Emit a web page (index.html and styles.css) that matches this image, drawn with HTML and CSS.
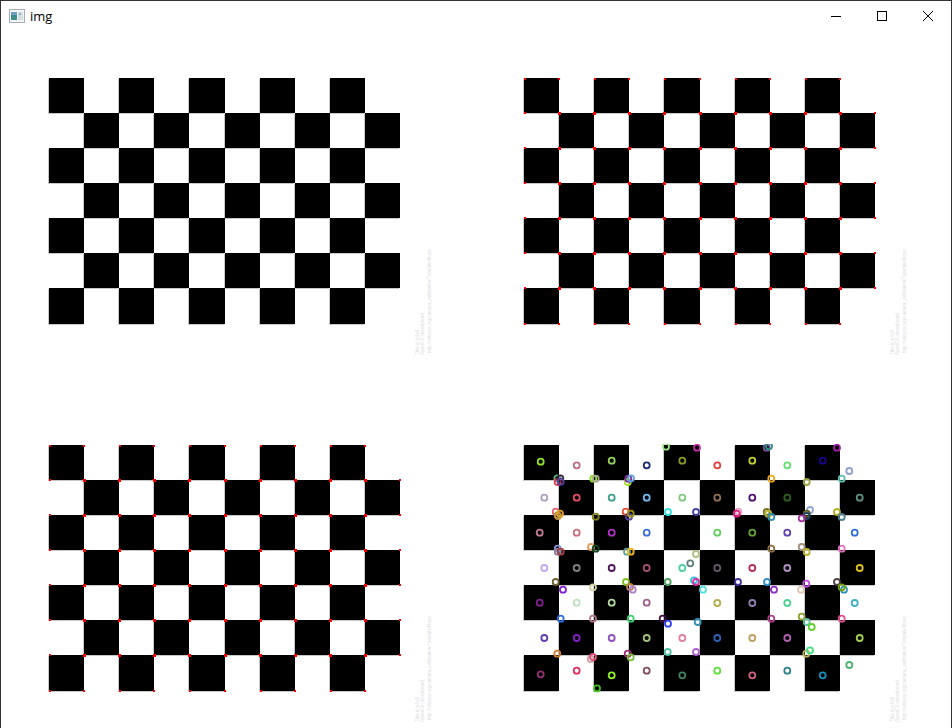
FILE: index.html
```html
<!DOCTYPE html>
<html>
  <head>
    <title>img</title>

    <link rel="stylesheet" href="styles.css">
  </head>
  <body>
    <div class="window">
      <div class="titlebar">
        <svg class="app-icon" width="16" height="14" viewBox="0 0 16 14">
          <rect x="0.5" y="0.5" width="15" height="13" fill="#f2f4f6" stroke="#a9adb3"/>
          <rect x="2" y="3" width="6" height="8" fill="#3f8f8a"/>
          <rect x="2" y="3" width="6" height="3" fill="#6f9fc4"/>
          <rect x="9" y="3" width="5" height="8" fill="#d5dde2"/>
          <rect x="10" y="4" width="2" height="2" fill="#8fb0b8"/>
        </svg>
        <span class="title">img</span>
        <div class="controls">
          <div class="control">
            <svg width="12" height="12" viewBox="0 0 12 12"><path d="M1 6.5H11" class="glyph"/></svg>
          </div>
          <div class="control">
            <svg width="12" height="12" viewBox="0 0 12 12"><rect x="1.5" y="1.5" width="9" height="9" class="glyph"/></svg>
          </div>
          <div class="control">
            <svg width="12" height="12" viewBox="0 0 12 12"><path d="M1 1L11 11M11 1L1 11" class="glyph"/></svg>
          </div>
        </div>
      </div>

      <div class="panels">
        <!-- top left: plain board, shared defs live here -->
        <svg class="panel" width="428" height="282" viewBox="0 0 428 282">
          <defs>
            <path id="squares" d="
              M1 1H36V36H1Z M71 1H106V36H71Z M141 1H177V36H141Z M212 1H247V36H212Z M282 1H317V36H282Z
              M36 36H71V71H36Z M106 36H141V71H106Z M177 36H212V71H177Z M247 36H282V71H247Z M317 36H352V71H317Z
              M1 71H36V106H1Z M71 71H106V106H71Z M141 71H177V106H141Z M212 71H247V106H212Z M282 71H317V106H282Z
              M36 106H71V141H36Z M106 106H141V141H106Z M177 106H212V141H177Z M247 106H282V141H247Z M317 106H352V141H317Z
              M1 141H36V176H1Z M71 141H106V176H71Z M141 141H177V176H141Z M212 141H247V176H212Z M282 141H317V176H282Z
              M36 176H71V211H36Z M106 176H141V211H106Z M177 176H212V211H177Z M247 176H282V211H247Z M317 176H352V211H317Z
              M1 211H36V247H1Z M71 211H106V247H71Z M141 211H177V247H141Z M212 211H247V247H212Z M282 211H317V247H282Z"/>

            <g id="board">
              <use href="#squares" x="-1" y="1" class="edge"/>
              <use href="#squares" class="black"/>
              <g class="watermark">
                <text transform="translate(371 278) rotate(-90)">This is a 9x6</text>
                <text transform="translate(376 278) rotate(-90)">OpenCV chessboard</text>
                <text transform="translate(383 276) rotate(-90)">http://wiki.ros.org/camera_calibration/Tutorials/Mono</text>
              </g>
            </g>

            <path id="dot-row" d="M35 35h3v3h-3z M70 35h3v3h-3z M105 35h3v3h-3z M140 35h3v3h-3z M176 35h3v3h-3z M211 35h3v3h-3z M246 35h3v3h-3z M281 35h3v3h-3z M316 35h3v3h-3z"/>
            <path id="edge-row" d="M1 1h2v2h-2z M35 1h2v2h-2z M71 1h2v2h-2z M105 1h2v2h-2z M141 1h2v2h-2z M176 1h2v2h-2z M212 1h2v2h-2z M246 1h2v2h-2z M282 1h2v2h-2z M316 1h2v2h-2z"/>
            <path id="edge-col" d="M0 35h2v2h-2z M0 70h2v2h-2z M0 105h2v2h-2z M0 140h2v2h-2z M0 175h2v2h-2z M0 210h2v2h-2z"/>

            <g id="corners" class="red">
              <use href="#dot-row"/>
              <use href="#dot-row" y="35"/>
              <use href="#dot-row" y="70"/>
              <use href="#dot-row" y="105"/>
              <use href="#dot-row" y="140"/>
              <use href="#dot-row" y="175"/>
              <use href="#edge-row"/>
              <use href="#edge-row" y="245"/>
              <use href="#edge-col" x="1"/>
              <use href="#edge-col" x="351"/>
            </g>
          </defs>
          <use href="#board"/>
        </svg>

        <!-- top right: detected corners -->
        <svg class="panel" width="428" height="282" viewBox="0 0 428 282">
          <use href="#board"/>
          <use href="#corners"/>
        </svg>

        <!-- bottom left: refined corners -->
        <svg class="panel" width="428" height="282" viewBox="0 0 428 282">
          <use href="#board"/>
          <use href="#corners"/>
        </svg>

        <!-- bottom right: random coloured rings, page coordinates -->
        <svg class="panel rings" width="428" height="282" viewBox="523 444 428 282">
          <use href="#board" x="523" y="444"/>
          <circle cx="540.7" cy="461.7" r="3" stroke="#8fe030"/>
          <circle cx="576.7" cy="465.3" r="3" stroke="#c06a8a"/>
          <circle cx="611.7" cy="460.7" r="3" stroke="#98d060"/>
          <circle cx="646.7" cy="465.3" r="3" stroke="#1a2a70"/>
          <circle cx="666" cy="446.7" r="3" stroke="#98e080"/>
          <circle cx="682.3" cy="460.7" r="3" stroke="#8a9a20"/>
          <circle cx="697" cy="447.7" r="3" stroke="#c030a0"/>
          <circle cx="557.3" cy="478.3" r="3" stroke="#50b080"/>
          <circle cx="557.7" cy="482" r="3" stroke="#e04050"/>
          <circle cx="560.3" cy="478.3" r="3" stroke="#402030"/>
          <circle cx="560.7" cy="481.7" r="3" stroke="#5040a0"/>
          <circle cx="593.3" cy="478.7" r="3" stroke="#80e020"/>
          <circle cx="595.7" cy="478.7" r="3" stroke="#b0a890"/>
          <circle cx="627.7" cy="482" r="3" stroke="#b0e030"/>
          <circle cx="628.3" cy="478.7" r="3" stroke="#8030a0"/>
          <circle cx="631" cy="478.3" r="3" stroke="#60a0e0"/>
          <circle cx="544.3" cy="497.7" r="3" stroke="#b0a0c0"/>
          <circle cx="576.7" cy="497.7" r="3" stroke="#e05060"/>
          <circle cx="611.7" cy="497.7" r="3" stroke="#40a090"/>
          <circle cx="646.7" cy="497.7" r="3" stroke="#70b8f0"/>
          <circle cx="682.3" cy="497.7" r="3" stroke="#80c880"/>
          <circle cx="555.7" cy="511.7" r="3" stroke="#e06070"/>
          <circle cx="557.7" cy="515.3" r="3" stroke="#90a040"/>
          <circle cx="558" cy="516" r="3" stroke="#c09040"/>
          <circle cx="560" cy="513.7" r="3" stroke="#e0a020"/>
          <circle cx="595.7" cy="516.7" r="3" stroke="#808020"/>
          <circle cx="625.7" cy="511.7" r="3" stroke="#e05030"/>
          <circle cx="629" cy="516.7" r="3" stroke="#5040a0"/>
          <circle cx="630.7" cy="513.7" r="3" stroke="#a09010"/>
          <circle cx="668" cy="512" r="3" stroke="#30e0e0"/>
          <circle cx="696" cy="512" r="3" stroke="#4040a0"/>
          <circle cx="539.7" cy="532.7" r="3" stroke="#c07a90"/>
          <circle cx="576.7" cy="532.7" r="3" stroke="#c87080"/>
          <circle cx="611.7" cy="532.7" r="3" stroke="#b030c0"/>
          <circle cx="646.7" cy="532.7" r="3" stroke="#4070e0"/>
          <circle cx="557.7" cy="548.7" r="3" stroke="#8090d0"/>
          <circle cx="557.7" cy="551.7" r="3" stroke="#9080a0"/>
          <circle cx="560.7" cy="551.7" r="3" stroke="#a04040"/>
          <circle cx="591" cy="547" r="3" stroke="#e0a060"/>
          <circle cx="595.7" cy="548.7" r="3" stroke="#104020"/>
          <circle cx="627" cy="551.7" r="3" stroke="#60a0a0"/>
          <circle cx="630.7" cy="551.7" r="3" stroke="#f0b820"/>
          <circle cx="544.3" cy="568" r="3" stroke="#c0a8f0"/>
          <circle cx="576.7" cy="568" r="3" stroke="#808080"/>
          <circle cx="611.7" cy="568" r="3" stroke="#501860"/>
          <circle cx="646.7" cy="568" r="3" stroke="#a05070"/>
          <circle cx="696" cy="554" r="3" stroke="#b0c080"/>
          <circle cx="690.3" cy="563.3" r="3" stroke="#608080"/>
          <circle cx="682.3" cy="568" r="3" stroke="#50d0a0"/>

          <circle cx="717.3" cy="465.3" r="3" stroke="#e04040"/>
          <circle cx="752.3" cy="460.7" r="3" stroke="#c0d030"/>
          <circle cx="787.3" cy="465.3" r="3" stroke="#60e070"/>
          <circle cx="822.7" cy="460.7" r="3" stroke="#200090"/>
          <circle cx="766.7" cy="447.7" r="3" stroke="#7050a0"/>
          <circle cx="769" cy="446.3" r="3" stroke="#309080"/>
          <circle cx="837" cy="447.7" r="3" stroke="#a020a0"/>
          <circle cx="849.3" cy="471" r="3" stroke="#90a0d0"/>
          <circle cx="771.3" cy="478.7" r="3" stroke="#f0a820"/>
          <circle cx="806.7" cy="482" r="3" stroke="#a0a040"/>
          <circle cx="841.7" cy="478.7" r="3" stroke="#60c0b0"/>
          <circle cx="717.3" cy="497.7" r="3" stroke="#907050"/>
          <circle cx="752.3" cy="497.7" r="3" stroke="#501070"/>
          <circle cx="787.3" cy="497.7" r="3" stroke="#306020"/>
          <circle cx="859.7" cy="497.7" r="3" stroke="#609080"/>
          <circle cx="738.3" cy="511.7" r="3" stroke="#f0a0c0"/>
          <circle cx="736.7" cy="513.7" r="3" stroke="#e02080"/>
          <circle cx="766.7" cy="512" r="3" stroke="#707020"/>
          <circle cx="768.3" cy="513.7" r="3" stroke="#c0b030"/>
          <circle cx="771.3" cy="517" r="3" stroke="#3090b0"/>
          <circle cx="810" cy="510" r="3" stroke="#90a8d0"/>
          <circle cx="806.7" cy="513.7" r="3" stroke="#606020"/>
          <circle cx="806.7" cy="516" r="3" stroke="#204060"/>
          <circle cx="801.7" cy="518.3" r="3" stroke="#a030a0"/>
          <circle cx="837" cy="512" r="3" stroke="#b0b020"/>
          <circle cx="841.7" cy="517" r="3" stroke="#508090"/>
          <circle cx="717.3" cy="532.7" r="3" stroke="#60d060"/>
          <circle cx="752.3" cy="532.7" r="3" stroke="#60a030"/>
          <circle cx="787.3" cy="532.7" r="3" stroke="#6040b0"/>
          <circle cx="854.7" cy="532.7" r="3" stroke="#3070e0"/>
          <circle cx="771.3" cy="548.7" r="3" stroke="#907040"/>
          <circle cx="801.7" cy="547" r="3" stroke="#a09080"/>
          <circle cx="806.7" cy="552" r="3" stroke="#c0b030"/>
          <circle cx="841.7" cy="548.7" r="3" stroke="#e070c0"/>
          <circle cx="717.3" cy="568" r="3" stroke="#605868"/>
          <circle cx="752.3" cy="568" r="3" stroke="#b03060"/>
          <circle cx="787.3" cy="568" r="3" stroke="#b090c0"/>
          <circle cx="859.7" cy="568" r="3" stroke="#e0c020"/>

          <circle cx="555.7" cy="582" r="3" stroke="#706030"/>
          <circle cx="563" cy="589.7" r="3" stroke="#8020d0"/>
          <circle cx="593" cy="587.3" r="3" stroke="#d0d0a0"/>
          <circle cx="626" cy="582" r="3" stroke="#80c020"/>
          <circle cx="630" cy="587" r="3" stroke="#c08040"/>
          <circle cx="632.7" cy="589.7" r="3" stroke="#b080d0"/>
          <circle cx="667.7" cy="582" r="3" stroke="#50a060"/>
          <circle cx="694" cy="580.3" r="3" stroke="#30c0e0"/>
          <circle cx="696" cy="582" r="3" stroke="#d030a0"/>
          <circle cx="703" cy="589.7" r="3" stroke="#50e0e0"/>
          <circle cx="539.7" cy="602.7" r="3" stroke="#802090"/>
          <circle cx="576.7" cy="602.7" r="3" stroke="#c0e0c0"/>
          <circle cx="611.7" cy="602.7" r="3" stroke="#b0d8a0"/>
          <circle cx="646.7" cy="602.7" r="3" stroke="#a06090"/>
          <circle cx="560.7" cy="618.7" r="3" stroke="#3070e0"/>
          <circle cx="593" cy="618.7" r="3" stroke="#b07888"/>
          <circle cx="630.7" cy="618.7" r="3" stroke="#40d070"/>
          <circle cx="662.7" cy="618.7" r="3" stroke="#401040"/>
          <circle cx="668" cy="623.7" r="3" stroke="#3040f0"/>
          <circle cx="697.7" cy="622" r="3" stroke="#3090b0"/>
          <circle cx="544.3" cy="638" r="3" stroke="#6040b0"/>
          <circle cx="576.7" cy="638" r="3" stroke="#8020c0"/>
          <circle cx="611.7" cy="638" r="3" stroke="#9050c0"/>
          <circle cx="646.7" cy="638" r="3" stroke="#a0c080"/>
          <circle cx="682.3" cy="638" r="3" stroke="#e080a0"/>
          <circle cx="557.3" cy="653.7" r="3" stroke="#d08030"/>
          <circle cx="590.7" cy="659" r="3" stroke="#d0a0a0"/>
          <circle cx="593" cy="657" r="3" stroke="#e05080"/>
          <circle cx="627.7" cy="653.7" r="3" stroke="#a03070"/>
          <circle cx="630.7" cy="657.3" r="3" stroke="#80c040"/>
          <circle cx="667.7" cy="652" r="3" stroke="#50c0a0"/>
          <circle cx="696" cy="652" r="3" stroke="#b060d0"/>
          <circle cx="540.7" cy="674.3" r="3" stroke="#903070"/>
          <circle cx="576.7" cy="670.7" r="3" stroke="#e03060"/>
          <circle cx="611.7" cy="675.3" r="3" stroke="#90f020"/>
          <circle cx="646.7" cy="670.7" r="3" stroke="#805060"/>
          <circle cx="682.3" cy="675.3" r="3" stroke="#408060"/>
          <circle cx="597" cy="688.3" r="3" stroke="#40c020"/>

          <circle cx="738" cy="582" r="3" stroke="#4030a0"/>
          <circle cx="767" cy="582" r="3" stroke="#3090d0"/>
          <circle cx="806.3" cy="583.7" r="3" stroke="#c050e0"/>
          <circle cx="837" cy="582" r="3" stroke="#504040"/>
          <circle cx="844" cy="589.7" r="3" stroke="#3090c0"/>
          <circle cx="841.7" cy="587.3" r="3" stroke="#70a000"/>
          <circle cx="774" cy="589.7" r="3" stroke="#9030c0"/>
          <circle cx="801" cy="589.7" r="3" stroke="#e0c8b0"/>
          <circle cx="717.3" cy="603" r="3" stroke="#b0b050"/>
          <circle cx="752.3" cy="603" r="3" stroke="#9080b0"/>
          <circle cx="787.3" cy="603" r="3" stroke="#50d090"/>
          <circle cx="854.7" cy="603" r="3" stroke="#40b0c0"/>
          <circle cx="771.3" cy="618.7" r="3" stroke="#b04090"/>
          <circle cx="801.7" cy="616.7" r="3" stroke="#90a030"/>
          <circle cx="806.7" cy="622" r="3" stroke="#60c0a0"/>
          <circle cx="811.7" cy="627" r="3" stroke="#60d030"/>
          <circle cx="841.7" cy="618.7" r="3" stroke="#e05090"/>
          <circle cx="717.3" cy="638" r="3" stroke="#3060b0"/>
          <circle cx="752.3" cy="638" r="3" stroke="#c0a060"/>
          <circle cx="787.3" cy="638" r="3" stroke="#b060b0"/>
          <circle cx="859.7" cy="638" r="3" stroke="#a0d050"/>
          <circle cx="806.3" cy="653.7" r="3" stroke="#c0b060"/>
          <circle cx="810" cy="650.3" r="3" stroke="#40e080"/>
          <circle cx="849.3" cy="665" r="3" stroke="#50b070"/>
          <circle cx="717.3" cy="670.7" r="3" stroke="#60e040"/>
          <circle cx="752.3" cy="675.3" r="3" stroke="#d06080"/>
          <circle cx="787.3" cy="670.7" r="3" stroke="#308090"/>
          <circle cx="822.7" cy="675.3" r="3" stroke="#1090c0"/>
        </svg>
      </div>
    </div>
  </body>
</html>
```

FILE: styles.css
```css
html,
body {
  margin: 0;
  height: 100%;
  background: #fff;
}
body {
  font-family: "Open Sans", "Noto Sans", sans-serif;
  overflow: hidden;
}
.window {
  height: 728px;
  box-sizing: border-box;
  border: 1px solid #333;
  border-bottom: none;
  background: #fff;
  overflow: hidden;
}

.titlebar {
  height: 30px;
  display: flex;
  align-items: center;
  padding-left: 8px;
}
.app-icon {
  margin-right: 5px;
}
.title {
  font-size: 13px;
  color: #000;
}
.controls {
  display: flex;
  margin-left: auto;
  height: 100%;
}
.control {
  width: 46px;
  display: flex;
  align-items: center;
  justify-content: center;
}
.glyph {
  fill: none;
  stroke: #000;
  stroke-width: 1;
}

.panels {
  display: grid;
  grid-template-columns: 428px 428px;
  grid-template-rows: 282px 282px;
  column-gap: 47px;
  row-gap: 85px;
  padding: 46px 0 0 47px;
}
.panel {
  display: block;
}
.edge {
  fill: #c8c8c8;
}
.black {
  fill: #000;
}
.red {
  fill: #f00;
}
.rings circle {
  fill: none;
  stroke-width: 1.8;
}
.watermark text {
  font-family: "Liberation Sans", sans-serif;
  font-size: 4.5px;
  fill: #dcdcdc;
}
```
